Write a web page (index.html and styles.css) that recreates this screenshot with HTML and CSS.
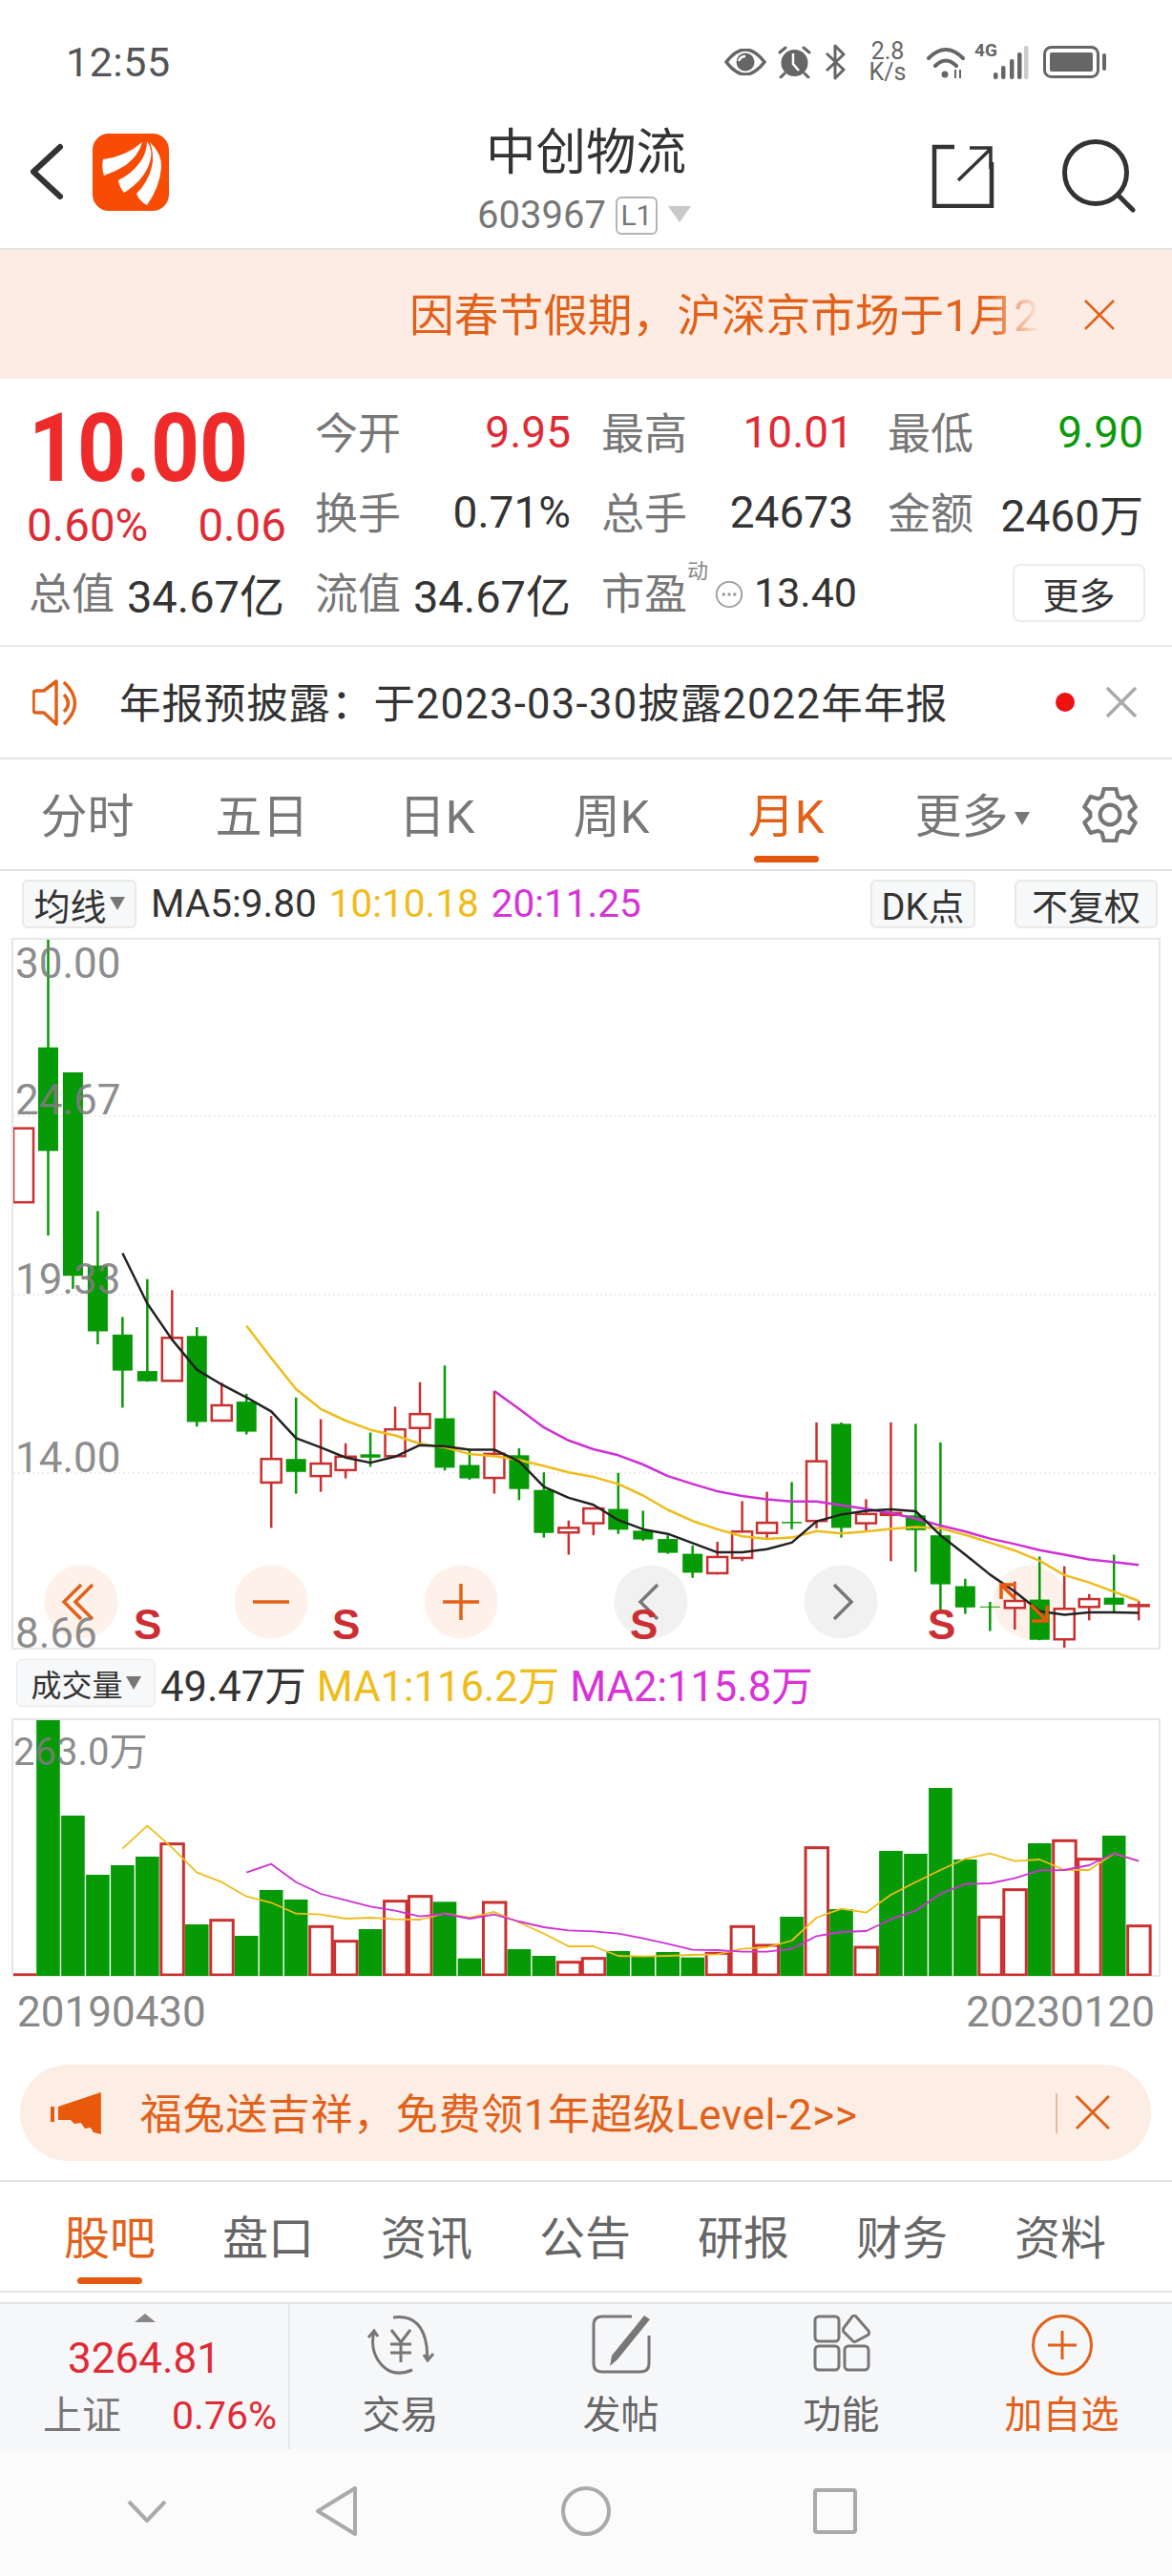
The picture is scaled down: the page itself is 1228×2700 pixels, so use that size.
FILE: index.html
```html
<!DOCTYPE html>
<html lang="zh-CN">
<head>
  <meta charset="utf-8">
  <title>中创物流</title>
  <link rel="stylesheet" href="styles.css">
</head>
<body>
  <div class="status-bar">
    <span class="time">12:55</span>
    <div class="status-icons">
      <svg class="ic-eye" width="44" height="28" viewBox="0 0 44 28"><path d="M2 14Q22-12 42 14 22 40 2 14Z" fill="none" stroke="#666" stroke-width="3.5"/><circle cx="22" cy="14" r="9.5" fill="#666"/><path d="M15 13q2-5 7-5" fill="none" stroke="#fff" stroke-width="2.5"/></svg>
      <svg class="ic-alarm" width="37" height="34" viewBox="0 0 37 34"><circle cx="18.500" cy="18" r="14" fill="#666"/><path d="M3 7l6-5M28 2l6 5M8 29l-4 4M29 29l4 4" stroke="#666" stroke-width="3" stroke-linecap="round"/><path d="M17 8v11l6 7" fill="none" stroke="#fff" stroke-width="2.500"/></svg>
      <svg class="ic-bt" width="22" height="38" viewBox="0 0 22 38"><path d="M2 10l18 17-9 9V2l9 9L2 28" fill="none" stroke="#666" stroke-width="3" stroke-linejoin="round"/></svg>
      <div class="net-speed"><span>2.8</span><span>K/s</span></div>
      <svg class="ic-wifi" width="40" height="34" viewBox="0 0 40 34"><path d="M2 13Q20-5 38 13M9 21Q20 10 31 21" fill="none" stroke="#666" stroke-width="4" stroke-linecap="round"/><circle cx="19" cy="30" r="3.500" fill="#666"/><path d="M30 25v9M35 25v9" stroke="#666" stroke-width="2"/></svg>
      <span class="net-4g">4G</span>
      <svg class="ic-signal" width="37" height="35" viewBox="0 0 37 35"><g fill="#666"><rect x="0" y="28" width="4.500" height="7" rx="2"/><rect x="8" y="21" width="4.500" height="14" rx="2"/><rect x="17" y="14" width="4.500" height="21" rx="2"/><rect x="25" y="7" width="4.500" height="28" rx="2"/></g><rect x="32" y="0" width="4.500" height="35" rx="2" fill="#ccc"/></svg>
      <svg class="ic-battery" width="66" height="34" viewBox="0 0 66 34"><rect x="1.500" y="1.500" width="56" height="31" rx="7" fill="none" stroke="#666" stroke-width="3"/><rect x="7" y="7" width="45" height="20" rx="2" fill="#666"/><rect x="62" y="8" width="4" height="18" rx="2" fill="#666"/></svg>
    </div>
  </div>

  <div class="top-nav">
    <div class="top-left">
      <svg class="ic-back" width="40" height="60" viewBox="0 0 40 60"><path d="M33 4L5 30l28 26" fill="none" stroke="#333" stroke-width="6" stroke-linecap="round" stroke-linejoin="round"/></svg>
      <svg width="80" height="81" viewBox="0 0 80 81"><rect width="80" height="81" rx="17" fill="#f84b04"/><path d="M11 27Q35 24 52 9 49 22 35 33 24 40 12 44 9 35 11 27Z M57 8Q64 18 60 30 54 49 33 62 28 56 27 49 41 42 49 31 57 21 57 8Z M60 9Q73 21 72 36 70 57 57 75 49 71 46 63 58 51 62 35 65 22 60 9Z" fill="#fff"/></svg>
    </div>
    <div class="stock-title">
      <div class="stock-name">中创物流</div>
      <div class="stock-code">603967<span class="l1">L1</span><i class="caret caret-light"></i></div>
    </div>
    <div class="top-right">
      <svg width="66" height="68" viewBox="0 0 66 68"><path d="M24 4H3v62h60V20" fill="none" stroke="#333" stroke-width="4.500"/><path d="M28 39L62 6M40 5h22v22" fill="none" stroke="#333" stroke-width="3.500"/></svg>
      <svg width="78" height="78" viewBox="0 0 78 78"><circle cx="36" cy="36" r="32.500" fill="none" stroke="#333" stroke-width="5"/><path d="M59 59l16 16" stroke="#333" stroke-width="5" stroke-linecap="round"/></svg>
    </div>
  </div>

  <div class="notice">
    <div class="notice-text">因春节假期，沪深京市场于1月2</div>
    <svg width="34" height="34" viewBox="0 0 34 34"><path d="M2 2l30 30M32 2L2 32" stroke="#e2611a" stroke-width="2.500"/></svg>
  </div>

  <div class="quote">
    <div class="price-box">
      <div class="price">10.00</div>
      <div class="change"><span>0.60%</span><span>0.06</span></div>
    </div>
    <div class="stat"><label>今开</label><b class="red">9.95</b></div>
    <div class="stat stat-mid"><label>最高</label><b class="red">10.01</b></div>
    <div class="stat"><label>最低</label><b class="green">9.90</b></div>
    <div class="stat"><label>换手</label><b>0.71%</b></div>
    <div class="stat stat-mid"><label>总手</label><b>24673</b></div>
    <div class="stat"><label>金额</label><b>2460万</b></div>
    <div class="stat stat-gap"><label>总值</label><b>34.67亿</b></div>
    <div class="stat stat-gap"><label>流值</label><b>34.67亿</b></div>
    <div class="stat stat-pe">
      <label>市盈</label><sup>动</sup>
      <svg width="34" height="34" viewBox="0 0 34 34"><circle cx="17" cy="17" r="15" fill="none" stroke="#999" stroke-width="2"/><circle cx="10.500" cy="17" r="2" fill="#999"/><circle cx="17" cy="17" r="2" fill="#999"/><circle cx="23.500" cy="17" r="2" fill="#999"/></svg>
      <b>13.40</b>
    </div>
    <div class="more-cell"><button class="more-btn">更多</button></div>
  </div>

  <div class="report-row">
    <svg width="56" height="50" viewBox="14 10 56 50"><path d="M39 13L26 23H18q-3 0-3 3v17q0 3 3 3h8l13 12z" fill="none" stroke="#e2611a" stroke-width="3.500" stroke-linejoin="round"/><path d="M47 27q9 9 0 18M47 14q23 22 0 44" fill="none" stroke="#e2611a" stroke-width="3.500"/></svg>
    <span class="report-text">年报预披露：于<span class="num">2023-03-30</span>披露<span class="num">2022</span>年年报</span>
    <i class="red-dot"></i>
    <svg width="34" height="34" viewBox="0 0 34 34"><path d="M2 2l30 30M32 2L2 32" stroke="#aaa" stroke-width="3.500"/></svg>
  </div>

  <div class="period-tabs">
    <span>分时</span>
    <span>五日</span>
    <span>日K</span>
    <span>周K</span>
    <span class="active">月K</span>
    <span class="tab-more">更多<i class="caret caret-dark"></i></span>
    <svg width="58" height="58" viewBox="0 0 56 56"><path d="M19.900 9.700L21.900 1.700H34.100L36.100 9.700L39.800 11.800L47.700 9.600L53.800 20.100L47.900 25.900V30.100L53.800 35.900L47.700 46.400L39.800 44.200L36.100 46.300L34.100 54.300H21.900L19.900 46.300L16.200 44.200L8.300 46.400L2.200 35.900L8.100 30.100V25.900L2.200 20.100L8.300 9.600L16.200 11.800Z" fill="none" stroke="#777" stroke-width="4" stroke-linejoin="round"/><circle cx="28" cy="28" r="10" fill="none" stroke="#777" stroke-width="4"/></svg>
  </div>

  <div class="ma-row">
    <div class="chip">均线<i class="caret caret-dark"></i></div>
    <span class="ma-dark">MA5:9.80</span>
    <span class="ma-yellow">10:10.18</span>
    <span class="ma-pink">20:11.25</span>
    <div class="chip chip-dk">DK点</div>
    <div class="chip chip-fq">不复权</div>
  </div>

  <div class="kline-box">
    <svg id="kline" width="1200" height="742"></svg>
    <span class="axis-label" style="top:3px">30.00</span>
    <span class="axis-label" style="top:146px">24.67</span>
    <span class="axis-label" style="top:334px">19.33</span>
    <span class="axis-label" style="top:521px">14.00</span>
    <span class="axis-label" style="top:705px">8.66</span>
    <span class="s-mark" style="left:126px">S</span>
    <span class="s-mark" style="left:334px">S</span>
    <span class="s-mark" style="left:646px">S</span>
    <span class="s-mark" style="left:958px">S</span>
  </div>

  <div class="vol-row">
    <div class="chip chip-vol">成交量<i class="caret caret-dark"></i></div>
    <span class="ma-dark">49.47万</span>
    <span class="ma-yellow">MA1:116.2万</span>
    <span class="ma-pink">MA2:115.8万</span>
  </div>

  <div class="vol-box">
    <svg id="volume" width="1200" height="268"></svg>
    <span class="vol-max">263.0万</span>
  </div>

  <div class="date-row"><span>20190430</span><span>20230120</span></div>

  <div class="promo">
    <svg width="54" height="44" viewBox="0 0 54 44"><path d="M0 15h4v16H0zM8 15L53 0v44l-8-2-3-5-6 1-4-6-7 1-4-4H8z" fill="#e8590c"/></svg>
    <span class="promo-text">福兔送吉祥，免费领1年超级Level-2&gt;&gt;</span>
    <svg width="58" height="42" viewBox="0 0 58 42"><path d="M1 0v42" stroke="#e2a585" stroke-width="1.500"/><path d="M22 3l34 34M56 3L22 37" stroke="#e2611a" stroke-width="3"/></svg>
  </div>

  <div class="info-tabs">
    <span class="active">股吧</span>
    <span>盘口</span>
    <span>资讯</span>
    <span>公告</span>
    <span>研报</span>
    <span>财务</span>
    <span>资料</span>
  </div>

  <div class="toolbar">
    <div class="index-cell">
      <i class="caret-up"></i>
      <div class="index-value">3264.81</div>
      <div class="index-line"><span>上证</span><span class="red">0.76%</span></div>
    </div>
    <div class="tool">
      <svg width="72" height="64" viewBox="0 0 72 64"><path d="M28 3Q58-1 63 33l1 14M70 41l-6 7-4-6M48 58Q24 68 11 46 4 33 8 18M2 24l6-7 4 6" fill="none" stroke="#777" stroke-width="3"/><path d="M26 16l10 13 10-13M36 29v21M25 31h22M25 40h22" fill="none" stroke="#777" stroke-width="3"/></svg>
      <span>交易</span>
    </div>
    <div class="tool">
      <svg width="62" height="62" viewBox="0 0 62 62"><path d="M42 2H11Q2 2 2 11v40q0 9 9 9h40q9 0 9-9V22" fill="none" stroke="#777" stroke-width="3"/><path d="M55 1l6 4-34 42-8 7 2-11z" fill="#777"/></svg>
      <span>发帖</span>
    </div>
    <div class="tool">
      <svg width="60" height="60" viewBox="0 0 60 60"><g fill="none" stroke="#777" stroke-width="3"><rect x="2" y="2" width="25" height="26" rx="4"/><path d="M44 1l14 16q1 3 0 4L45 28q-2 1-3 0L32 18q-1-2 0-4L41 2q2-2 3-1z"/><rect x="2" y="33" width="25" height="25" rx="4"/><rect x="33" y="33" width="25" height="25" rx="4"/></g></svg>
      <span>功能</span>
    </div>
    <div class="tool tool-add">
      <svg width="64" height="64" viewBox="0 0 64 64"><circle cx="32" cy="32" r="30.500" fill="none" stroke="#e2611a" stroke-width="3"/><path d="M17 32h30M32 17v30" stroke="#e2611a" stroke-width="3"/></svg>
      <span>加自选</span>
    </div>
  </div>

  <div class="sys-nav">
    <svg width="42" height="24" viewBox="0 0 42 24"><path d="M2 2l19 20L40 2" fill="none" stroke="#aaa" stroke-width="4"/></svg>
    <svg width="44" height="52" viewBox="0 0 44 52"><path d="M42 2v48L3 26z" fill="none" stroke="#aaa" stroke-width="4" stroke-linejoin="round"/></svg>
    <svg width="52" height="52" viewBox="0 0 52 52"><circle cx="26" cy="26" r="24" fill="none" stroke="#aaa" stroke-width="4"/></svg>
    <svg width="46" height="48" viewBox="0 0 46 48"><rect x="2" y="2" width="42" height="44" rx="2" fill="none" stroke="#aaa" stroke-width="4"/></svg>
  </div>

  <script src="chart.js"></script>
</body>
</html>
```

FILE: styles.css
```css
* {
  margin: 0;
  padding: 0;
  box-sizing: border-box;
}

body {
  width: 1228px;
  background-color: #fff;
  color: #333;
  font-family: Roboto, "Noto Sans CJK SC", sans-serif;
}

i {
  display: inline-block;
}

.red { color: #de2b35; }
.green { color: #0a9a0a; }

.caret {
  width: 0;
  height: 0;
  border-left: 8px solid transparent;
  border-right: 8px solid transparent;
  border-top: 14px solid #777;
}

.caret-light {
  border-left-width: 12px;
  border-right-width: 12px;
  border-top: 17px solid #c9c9c9;
  margin-left: 11px;
  vertical-align: 6px;
}

.caret-dark {
  margin-left: 3px;
  vertical-align: 8px;
}

/* status bar */
.status-bar {
  height: 112px;
  display: flex;
  justify-content: space-between;
  align-items: center;
  padding: 18px 69px 0;
}

.time {
  font-size: 43px;
  color: #555;
  letter-spacing: 0.5px;
}

.status-icons {
  display: flex;
  align-items: center;
}

.ic-alarm { margin-left: 11px; }
.ic-bt { margin-left: 13px; }
.ic-wifi { margin-left: 22px; }
.ic-signal { margin-left: 0; }
.ic-battery { margin-left: 15px; }

.net-speed {
  margin-left: 25px;
  width: 38px;
  display: flex;
  flex-direction: column;
  align-items: center;
  font-size: 25px;
  line-height: 22px;
  color: #666;
}

.net-4g {
  margin-left: 10px;
  width: 20px;
  align-self: flex-start;
  font-size: 19px;
  line-height: 20px;
  font-weight: 700;
  color: #666;
}

/* header */
.top-nav {
  height: 150px;
  display: grid;
  grid-template-columns: 1fr auto 1fr;
  align-items: center;
  border-bottom: 2px solid #e2e2e2;
}

.top-left {
  display: flex;
  align-items: center;
  gap: 27px;
  padding: 0 0 12px 30px;
}

.stock-title {
  text-align: center;
  padding-top: 7px;
}

.stock-name {
  font-size: 52.500px;
  line-height: 62px;
  color: #333;
}

.stock-code {
  font-size: 40px;
  line-height: 50px;
  color: #777;
  margin: 10px 0 0 -4px;
}

.l1 {
  display: inline-block;
  margin-left: 10px;
  width: 44px;
  height: 40px;
  border: 2px solid #b5b5b5;
  border-radius: 6px;
  font-size: 30px;
  line-height: 36px;
  text-align: center;
  vertical-align: 3px;
}

.top-right {
  display: flex;
  justify-content: flex-end;
  align-items: center;
  gap: 70px;
  padding-right: 38px;
  padding-bottom: 4px;
}

/* scrolling notice */
.notice {
  height: 135px;
  background-color: #fdece4;
  display: flex;
  align-items: center;
  padding-left: 429px;
  color: #e2611a;
}

.notice-text {
  width: 661px;
  margin: -6px 45px 0 0;
  white-space: nowrap;
  font-size: 46.700px;
  -webkit-mask-image: linear-gradient(to right, #000 92%, transparent 100%);
  mask-image: linear-gradient(to right, #000 92%, transparent 100%);
}

/* quote grid */
.quote {
  height: 281px;
  display: grid;
  grid-template-columns: repeat(4, 268px);
  grid-auto-rows: 84px;
  column-gap: 32px;
  padding: 14px 0 0 30px;
  border-bottom: 2px solid #eaeaea;
}

.price-box {
  grid-row: 1 / 3;
  padding-top: 17px;
}

.price {
  font-size: 100px;
  line-height: 84px;
  font-weight: 700;
  color: #ee2a2a;
  transform: scaleX(0.89);
  transform-origin: left center;
}

.change {
  display: flex;
  justify-content: space-between;
  margin: 18px -2px 0 -2px;
  font-size: 47.500px;
  line-height: 42px;
  color: #de2b35;
}

.stat {
  display: flex;
  justify-content: space-between;
  align-items: center;
  font-size: 46px;
  white-space: nowrap;
}

.stat label {
  color: #777;
  font-size: 45px;
  margin-bottom: 4px;
}

.stat b {
  font-weight: 400;
}

.stat-mid {
  padding-right: 4px;
}

.stat-pe {
  justify-content: flex-start;
  position: relative;
}

.stat-pe sup {
  font-size: 22px;
  line-height: 22px;
  color: #888;
  align-self: flex-start;
  margin-top: 9px;
  width: 0;
}

.stat-pe svg {
  margin: 4px 0 0 29px;
}

.stat-pe b {
  font-size: 43px;
  margin-left: 11px;
  color: #333;
}

.stat-gap b {
  font-size: 47px;
}

.more-cell {
  display: flex;
  justify-content: flex-end;
  align-items: center;
}

.more-btn {
  width: 139px;
  height: 61px;
  margin-right: -2px;
  background-color: #fff;
  border: 2px solid #ebebeb;
  border-radius: 8px;
  color: #333;
  font-size: 38px;
  font-family: inherit;
}

/* annual report row */
.report-row {
  height: 118px;
  display: flex;
  align-items: center;
  padding-left: 34px;
  border-bottom: 2px solid #e4e4e4;
}

.report-text {
  margin: -4px 0 0 35px;
  width: 981px;
  font-size: 43.500px;
  color: #333;
  letter-spacing: 0.9px;
}

.report-text .num {
  letter-spacing: 1.3px;
}

.red-dot {
  width: 20px;
  height: 20px;
  border-radius: 50%;
  background-color: #ee1111;
}

.report-row svg:last-child {
  margin-left: 32px;
}

/* period tabs */
.period-tabs {
  height: 117px;
  display: grid;
  grid-template-columns: repeat(6, 183px) 130px;
  align-items: center;
  justify-items: center;
  font-size: 49px;
  color: #777;
  border-bottom: 2px solid #e2e2e2;
}

.period-tabs span {
  position: relative;
  padding-bottom: 4px;
}

.period-tabs .tab-more {
  margin-left: 24px;
}

.tab-more .caret-dark {
  margin-left: 6px;
}

.period-tabs .active,
.info-tabs .active {
  color: #e2611a;
}

.period-tabs .active::after,
.info-tabs .active::after {
  content: "";
  position: absolute;
  left: 50%;
  bottom: -13px;
  width: 68px;
  height: 7px;
  margin-left: -34px;
  border-radius: 4px;
  background-color: #e4570f;
}

/* indicator rows */
.ma-row,
.vol-row {
  display: flex;
  align-items: center;
  white-space: nowrap;
}

.ma-row {
  height: 67px;
  padding: 1px 15px 0 23px;
  gap: 13px;
  font-size: 40.500px;
}

.ma-dark { color: #333; }
.ma-yellow { color: #efbc1a; }
.ma-pink { color: #d733d7; }

.chip {
  height: 51px;
  display: flex;
  align-items: center;
  justify-content: center;
  background-color: #f7f8f9;
  border: 2px solid #e8e8e8;
  border-radius: 6px;
  font-size: 38px;
  color: #333;
}

.chip-dk {
  width: 110px;
  margin-left: auto;
}

.chip-fq {
  width: 150px;
  margin-left: 28px;
}

.ma-row .chip:first-child {
  width: 120px;
  margin-right: 2px;
}

.kline-box,
.vol-box {
  position: relative;
  width: 1204px;
  margin-left: 12px;
  border: 2px solid #e6e6e6;
}

.kline-box {
  height: 746px;
  margin-top: 3px;
}

.kline-box svg,
.vol-box svg {
  display: block;
  overflow: hidden;
}

.axis-label {
  position: absolute;
  left: 2px;
  font-size: 44px;
  line-height: 44px;
  color: rgba(125, 125, 125, 0.9);
}

.s-mark {
  position: absolute;
  top: 696px;
  font-family: "Liberation Sans", sans-serif;
  font-weight: 700;
  font-size: 44px;
  line-height: 44px;
  color: #cc2e33;
}

.vol-row {
  height: 52px;
  margin-top: 9px;
  padding-left: 17px;
  gap: 11px;
  font-size: 43.500px;
}

.chip-vol {
  width: 146px;
  height: 50px;
  font-size: 32px;
  border-width: 1px;
  margin-right: -6px;
}

.vol-box {
  height: 271px;
  margin-top: 11px;
}

.vol-max {
  position: absolute;
  left: 0;
  top: 12px;
  font-size: 40px;
  line-height: 44px;
  color: rgba(125, 125, 125, 0.9);
}

.date-row {
  height: 73px;
  display: flex;
  justify-content: space-between;
  align-items: center;
  padding: 0 18px;
  font-size: 44px;
  color: #888;
}

/* promo banner */
.promo {
  height: 101px;
  margin: 19px 22px 0 21px;
  display: flex;
  align-items: center;
  padding: 0 42px 0 32px;
  border-radius: 50px;
  background-color: #fdeee5;
  color: #e2611a;
}

.promo-text {
  margin: -3px 0 0 40px;
  width: 962px;
  font-size: 44px;
  white-space: nowrap;
  letter-spacing: 0.65px;
}

/* info tabs */
.info-tabs {
  height: 118px;
  margin-top: 20px;
  display: grid;
  grid-template-columns: repeat(7, 166px);
  justify-items: center;
  align-items: center;
  padding-left: 32px;
  font-size: 48px;
  color: #666;
  border-top: 2px solid #e4e4e4;
  border-bottom: 2px solid #e4e4e4;
}

.info-tabs span {
  position: relative;
  padding-bottom: 4px;
}

/* bottom toolbar */
.toolbar {
  height: 154px;
  margin-top: 10px;
  display: grid;
  grid-template-columns: 304px repeat(4, 231px);
  background-color: #f6f7f9;
  border-top: 2px solid #e2e2e2;
}

.index-cell {
  position: relative;
  border-right: 2px solid #e8e8e8;
  padding-top: 34px;
  text-align: center;
}

.caret-up {
  position: absolute;
  left: 141px;
  top: 10px;
  width: 0;
  height: 0;
  border-left: 11px solid transparent;
  border-right: 11px solid transparent;
  border-bottom: 9px solid #888;
}

.index-value {
  font-size: 44px;
  line-height: 46px;
  color: #de2b35;
}

.index-line {
  display: flex;
  justify-content: space-between;
  align-items: center;
  padding: 0 12px 0 45px;
  margin-top: 13px;
  font-size: 41px;
  line-height: 48px;
  color: #777;
}

.index-line .red {
  color: #de2b35;
}

.tool {
  display: flex;
  flex-direction: column;
  align-items: center;
  padding-top: 11px;
  font-size: 40px;
  line-height: 52px;
  color: #666;
}

.tool span {
  margin-top: 18px;
}

.tool:nth-child(2) svg { margin-bottom: -2px; }
.tool:nth-child(4) svg { margin-bottom: 2px; }
.tool-add svg { margin-bottom: -2px; }

.tool-add {
  color: #e2611a;
}

/* android nav */
.sys-nav {
  height: 134px;
  display: flex;
  align-items: center;
  padding: 0 0 5px 133px;
  background-color: #fbfbfb;
}

.sys-nav svg:nth-child(2) { margin-left: 155px; }
.sys-nav svg:nth-child(3) { margin-left: 214px; }
.sys-nav svg:nth-child(4) { margin-left: 212px; }
```

FILE: chart.js
```js
'use strict';

const RED = '#c9302f';
const GREEN = '#069a06';
const YELLOW = '#efbc1a';
const PINK = '#cf30d6';
const STEP = 25.97;

const barX = function (i) {
  return 10.5 + STEP * i;
};

// [high, top, bottom, low, up], y values as read off the chart
const candles = [
  [418, 418, 578, 578, 1], [5, 243, 467, 650, 0], [297, 297, 737, 765, 0], [597, 715, 857, 885, 0],
  [826, 864, 942, 1022, 0], [744, 943, 965, 966, 0], [768, 871, 964, 966, 1], [848, 867, 1053, 1063, 0],
  [968, 1017, 1050, 1052, 1], [992, 1009, 1074, 1080, 0], [1040, 1133, 1184, 1282, 1], [1000, 1133, 1161, 1208, 0],
  [1047, 1143, 1170, 1204, 1], [1099, 1128, 1157, 1175, 1], [1076, 1123, 1130, 1150, 0], [1020, 1069, 1127, 1128, 1],
  [967, 1036, 1066, 1105, 1], [931, 1045, 1152, 1158, 0], [1112, 1146, 1175, 1178, 0], [986, 1122, 1174, 1208, 1],
  [1110, 1125, 1198, 1222, 0], [1162, 1200, 1293, 1303, 0], [1266, 1282, 1292, 1340, 1], [1240, 1240, 1272, 1298, 1],
  [1163, 1241, 1286, 1295, 0], [1245, 1288, 1307, 1310, 0], [1298, 1306, 1336, 1338, 0], [1320, 1338, 1379, 1390, 0],
  [1312, 1345, 1380, 1383, 1], [1224, 1290, 1347, 1354, 1], [1204, 1271, 1293, 1305, 1], [1183, 1269, 1272, 1285, 0],
  [1054, 1138, 1267, 1283, 1], [1054, 1057, 1282, 1303, 0], [1220, 1252, 1272, 1288, 1], [1054, 1250, 1254, 1354, 1],
  [1057, 1255, 1287, 1377, 0], [1097, 1298, 1404, 1460, 0], [1392, 1408, 1454, 1468, 0], [1442, 1452, 1454, 1505, 0],
  [1398, 1440, 1455, 1502, 1], [1344, 1437, 1524, 1525, 0], [1365, 1457, 1523, 1545, 1], [1425, 1436, 1453, 1482, 1],
  [1340, 1433, 1448, 1466, 0], [1440, 1449, 1451, 1482, 1]
];

const ma5 = [688, 797, 875, 940, 972, 1000, 1030, 1088, 1108, 1130, 1141, 1128, 1103, 1106, 1113, 1113, 1138, 1193, 1217, 1232,
  1265, 1285, 1295, 1315, 1335, 1335, 1328, 1314, 1268, 1253, 1245, 1242, 1246, 1298, 1340, 1383, 1420, 1462, 1470, 1465, 1465, 1466];
const ma10 = [845, 915, 982, 1025, 1050, 1070, 1082, 1100, 1108, 1122, 1127, 1135, 1148, 1162, 1172,
  1187, 1212, 1243, 1267, 1285, 1300, 1306, 1303, 1289, 1294, 1290, 1284, 1280, 1283, 1297, 1314, 1331, 1353, 1384, 1400, 1420, 1440];
const ma20 = [986, 1025, 1065, 1093, 1112,
  1125, 1145, 1170, 1187, 1203, 1213, 1220, 1225, 1225, 1233, 1241, 1250, 1262, 1277, 1290, 1305, 1317, 1330, 1340, 1350, 1356, 1362];

// [top, up]
const volumes = [
  [985, 1], [183, 0], [489, 0], [675, 0], [645, 0], [618, 0], [578, 1], [831, 0], [818, 1], [867, 0], [723, 0], [753, 0],
  [838, 1], [884, 1], [846, 0], [758, 1], [743, 1], [760, 0], [938, 0], [762, 1], [909, 0], [930, 0], [950, 1], [938, 1],
  [915, 0], [932, 0], [918, 0], [935, 0], [922, 1], [838, 1], [897, 1], [807, 0], [590, 1], [783, 0], [903, 1], [600, 0],
  [609, 0], [402, 0], [627, 0], [808, 1], [722, 1], [576, 0], [568, 1], [626, 1], [552, 0], [836, 1]
];

const volMa1 = [593, 521, 590, 668, 698, 743, 763, 797, 800, 813, 810, 815, 816, 797, 810, 792, 825, 860, 900, 900,
  930, 932, 930, 927, 925, 908, 903, 882, 810, 782, 794, 738, 698, 660, 625, 608, 632, 627, 660, 660, 608, 632];
const volMa2 = [668, 641, 698, 735, 755, 775, 788, 806, 798, 813, 800, 822, 840, 850, 853,
  860, 875, 892, 911, 912, 917, 917, 908, 868, 855, 852, 815, 788, 735, 704, 702, 686, 661, 660, 645, 608, 632];

const ky = function (v) {
  return v / 2.063 - 5;
};

const vy = function (v) {
  return v / 3 - 63;
};

const polyline = function (values, start, color, width, toY) {
  const points = values.map(function (v, i) {
    return barX(start + i).toFixed(1) + ',' + toY(v).toFixed(1);
  });
  return '<polyline points="' + points.join(' ') + '" fill="none" stroke="' + color + '" stroke-width="' + width + '" stroke-linejoin="round"/>';
};

// zoom and pan buttons sit under the candles, their icons on top
const button = function (cx, color) {
  return '<circle cx="' + cx + '" cy="694" r="38.500" fill="' + color + '"/>';
};

const icon = function (d, color) {
  return '<path d="' + d + '" fill="none" stroke="' + color + '" stroke-width="3.500"/>';
};

let k = '';

[185, 372, 559].forEach(function (y) {
  k += '<line x1="0" x2="1200" y1="' + y + '" y2="' + y + '" stroke="#e8e8e8" stroke-width="1.500" stroke-dasharray="2 3"/>';
});

[71, 270, 469, 1065].forEach(function (cx) {
  k += button(cx, '#fdf1ea');
});
[668, 867].forEach(function (cx) {
  k += button(cx, '#f1f1f1');
});

candles.forEach(function (c, i) {
  const x = barX(i);
  const color = c[4] ? RED : GREEN;
  k += '<line x1="' + x + '" x2="' + x + '" y1="' + ky(c[0]) + '" y2="' + ky(c[3]) + '" stroke="' + color + '" stroke-width="2.500"/>';
  if (c[4]) {
    k += '<rect x="' + (x - 10.5) + '" y="' + ky(c[1]) + '" width="21" height="' + (ky(c[2]) - ky(c[1])) + '" fill="#fff" stroke="' + color + '" stroke-width="2.500"/>';
  } else {
    k += '<rect x="' + (x - 10.5) + '" y="' + ky(c[1]) + '" width="21" height="' + (ky(c[2]) - ky(c[1])) + '" fill="' + color + '"/>';
  }
});

k += polyline(ma20, 19, PINK, 2.5, ky);
k += polyline(ma10, 9, YELLOW, 2.5, ky);
k += polyline(ma5, 4, '#222', 2.5, ky);

k += icon('M71 676L53 694l18 18M83 676L65 694l18 18', '#e2611a');
k += icon('M251 694h38', '#e2611a');
k += icon('M450 694h38M469 675v38', '#e2611a');
k += icon('M675 676L657 694l18 18', '#777');
k += icon('M860 676l18 18-18 18', '#777');
k += '<path d="M1050 676h-15v15M1036 677l13 13M1066 697l17 17M1083 698v16h-16" fill="none" stroke="#e8590c" stroke-width="3.500"/>';

document.querySelector('#kline').innerHTML = k;

let v = '';

volumes.forEach(function (b, i) {
  const x = barX(i);
  const bottom = vy(990);
  const top = vy(b[0]);
  if (i === 0) {
    v += '<rect x="0" y="' + top + '" width="24" height="3" fill="' + RED + '"/>';
  } else if (b[1]) {
    v += '<rect x="' + (x - 11.5) + '" y="' + top + '" width="23.500" height="' + (bottom - top) + '" fill="#fff" stroke="' + RED + '" stroke-width="3"/>';
  } else {
    v += '<rect x="' + (x - 12.3) + '" y="' + top + '" width="24.600" height="' + (bottom - top + 1) + '" fill="' + GREEN + '"/>';
  }
});

v += polyline(volMa1, 4, YELLOW, 1.8, vy);
v += polyline(volMa2, 9, PINK, 1.8, vy);

document.querySelector('#volume').innerHTML = v;
```
